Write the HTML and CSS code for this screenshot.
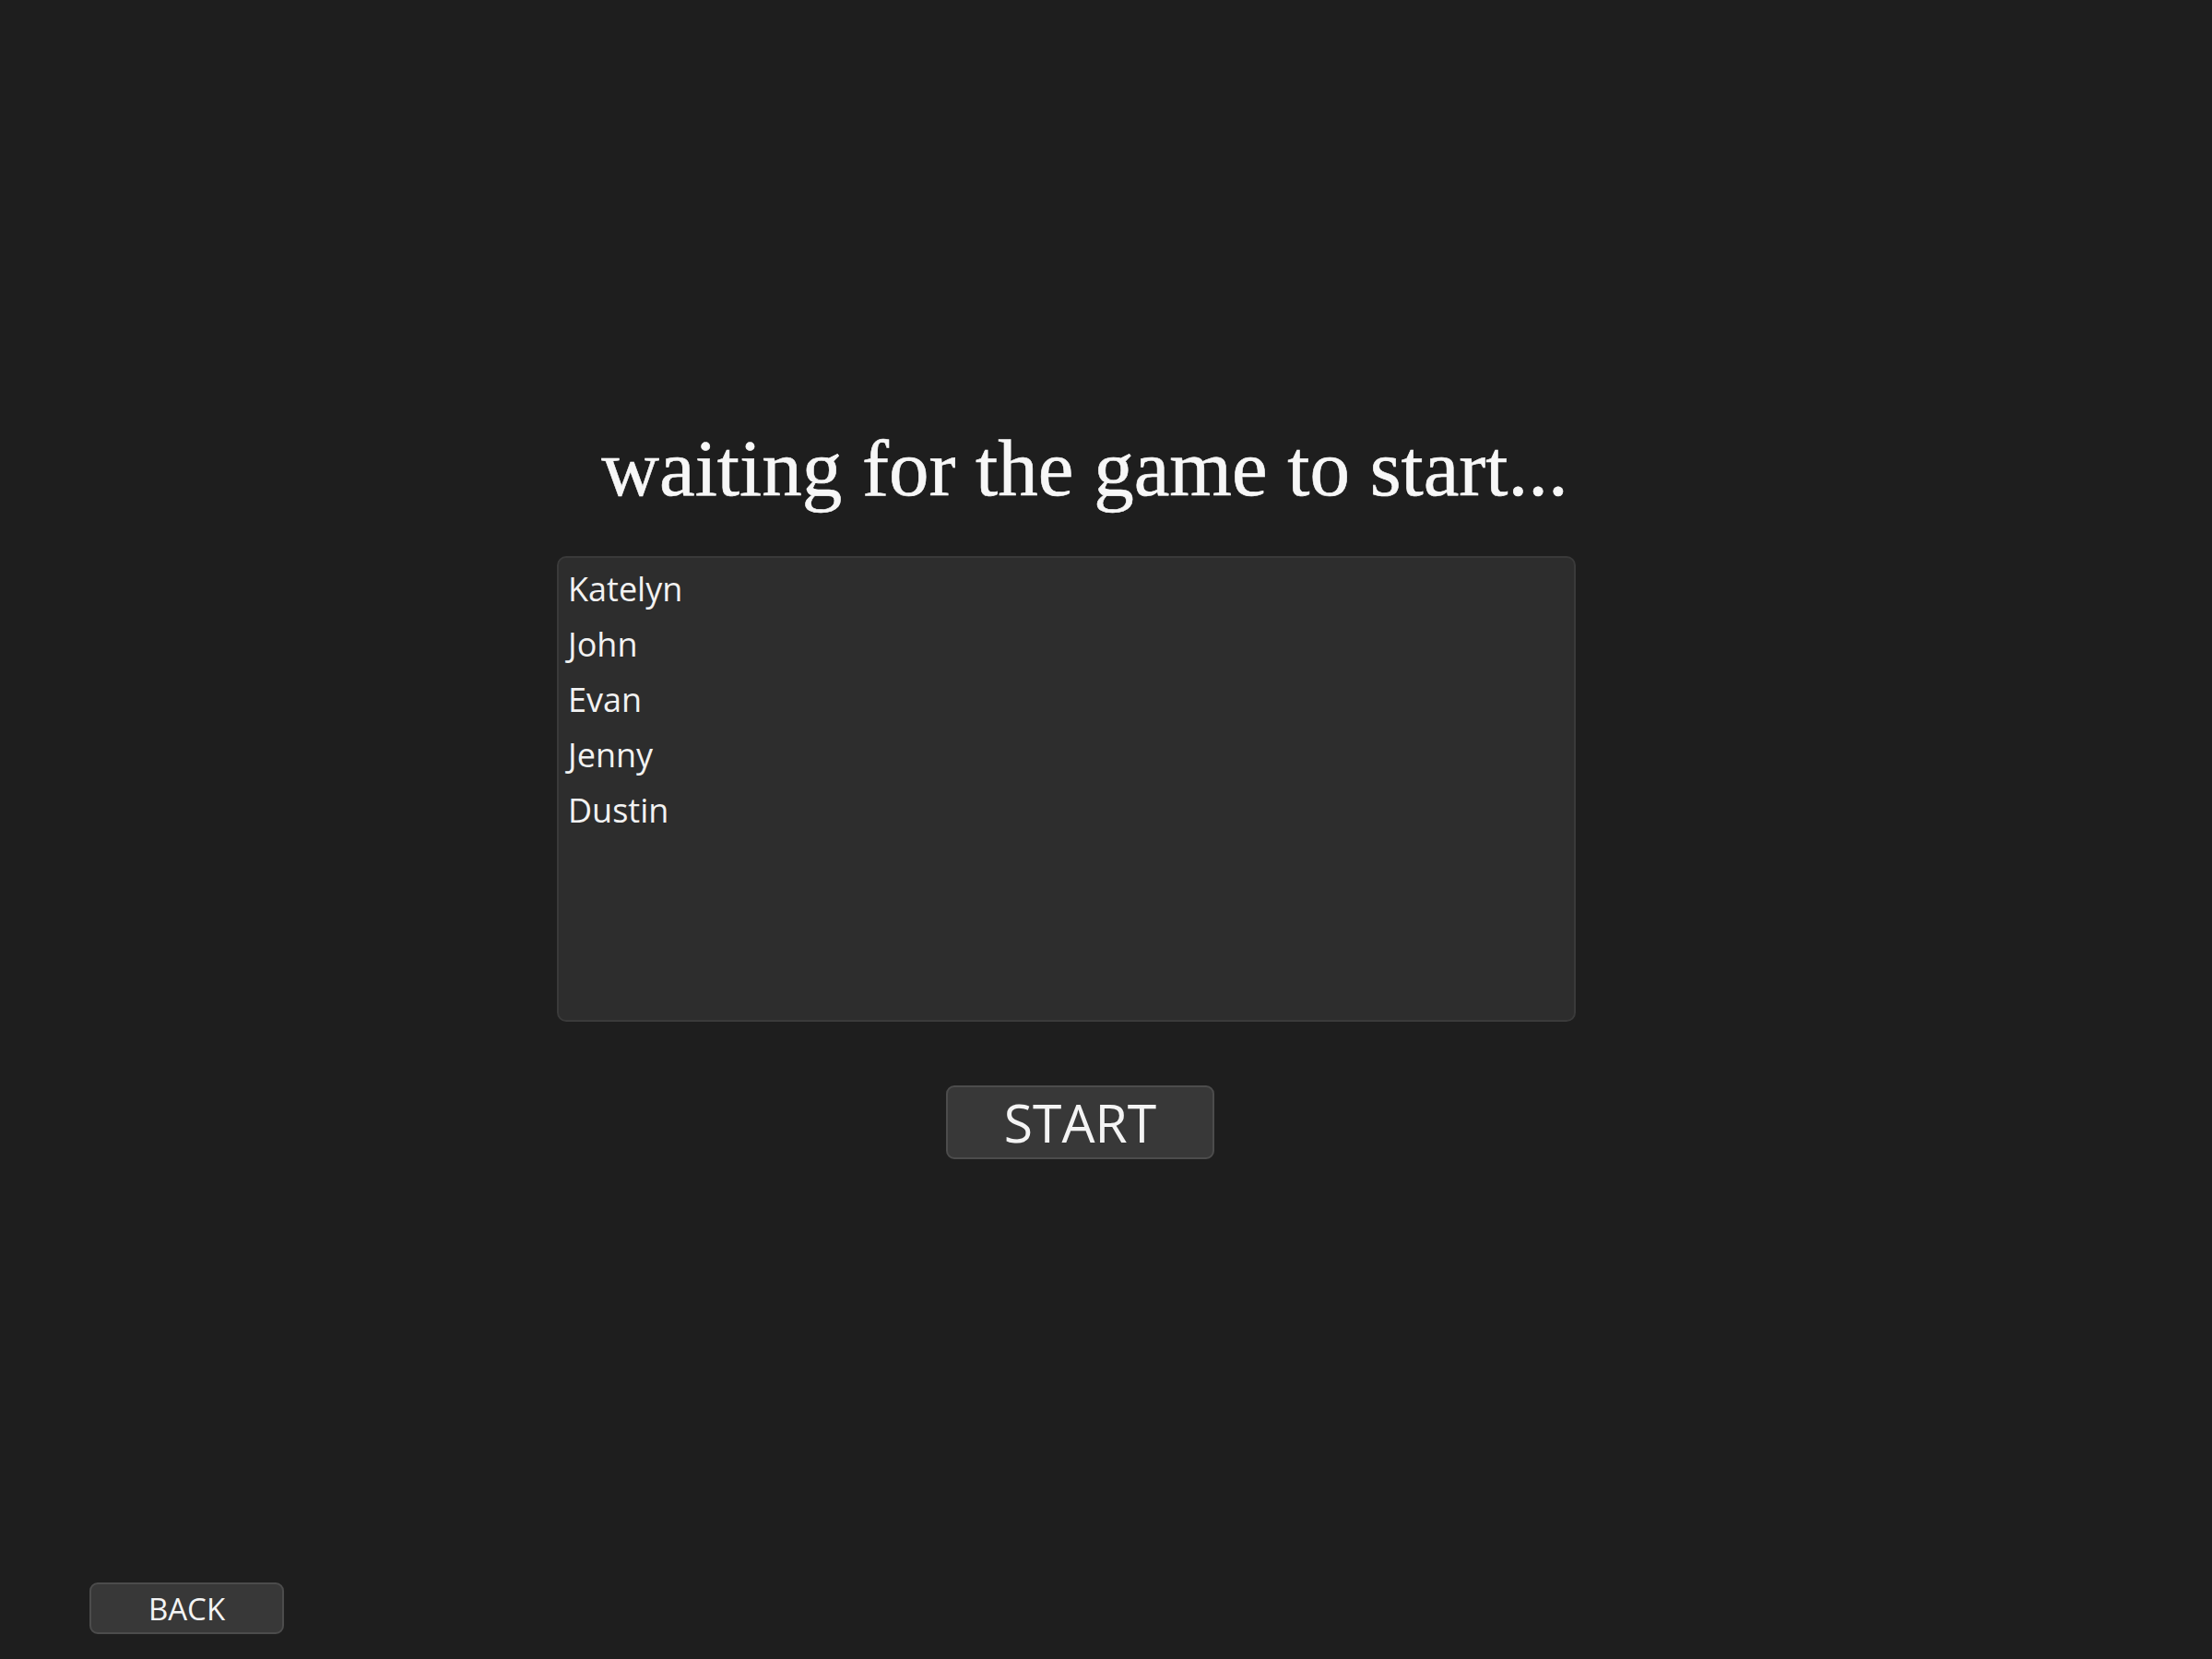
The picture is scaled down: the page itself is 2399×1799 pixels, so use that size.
FILE: index.html
```html
<!DOCTYPE html>
<html lang="en">
<head>
<meta charset="utf-8">
<title>Waiting</title>
<link rel="stylesheet" href="styles.css">
</head>
<body>
  <main class="stage">
    <h1 class="title">waiting for the game to start...</h1>
    <ul class="players">
      <li>Katelyn</li>
      <li>John</li>
      <li>Evan</li>
      <li>Jenny</li>
      <li>Dustin</li>
    </ul>
    <button class="btn btn-start">START</button>
  </main>
  <footer class="footer">
    <button class="btn btn-back">BACK</button>
  </footer>
</body>
</html>
```
FILE: styles.css
```css
* { box-sizing: border-box; }
html, body { margin: 0; padding: 0; }
body {
  background: #1e1e1e;
  color: #f2f2f2;
  font-family: "Open Sans", "Noto Sans", sans-serif;
  min-height: 100vh;
  display: flex;
  flex-direction: column;
}
.stage {
  flex: 1;
  width: 1105px;
  margin-left: 604px;
  padding-top: 464px;
  display: flex;
  flex-direction: column;
}
.title {
  margin: 0;
  padding-left: 40px;
  font-family: "Liberation Serif", "Times New Roman", serif;
  font-weight: normal;
  font-size: 87px;
  line-height: 1;
  text-align: center;
  color: #f7f7f7;
  -webkit-text-stroke: 0.6px #f7f7f7;
  white-space: nowrap;
}
.players {
  list-style: none;
  margin: 52px 0 0;
  padding: 4px 10px;
  height: 505px;
  background: #2d2d2d;
  border: 2px solid #3a3a3a;
  border-radius: 10px;
  font-size: 36px;
  line-height: 60px;
}
.btn {
  font-family: "Open Sans", "Noto Sans", sans-serif;
  color: #f4f4f4;
  background: #383838;
  border: 2px solid #4c4c4c;
  border-radius: 9px;
  display: flex;
  align-items: center;
  justify-content: center;
  padding: 0;
  cursor: pointer;
}
.btn-start {
  margin-top: 69px;
  align-self: center;
  margin-left: 30px;
  width: 291px;
  height: 80px;
  font-size: 57px;
}
.footer {
  padding: 0 0 27px 97px;
}
.btn-back {
  width: 211px;
  height: 56px;
  font-size: 33px;
}
```
